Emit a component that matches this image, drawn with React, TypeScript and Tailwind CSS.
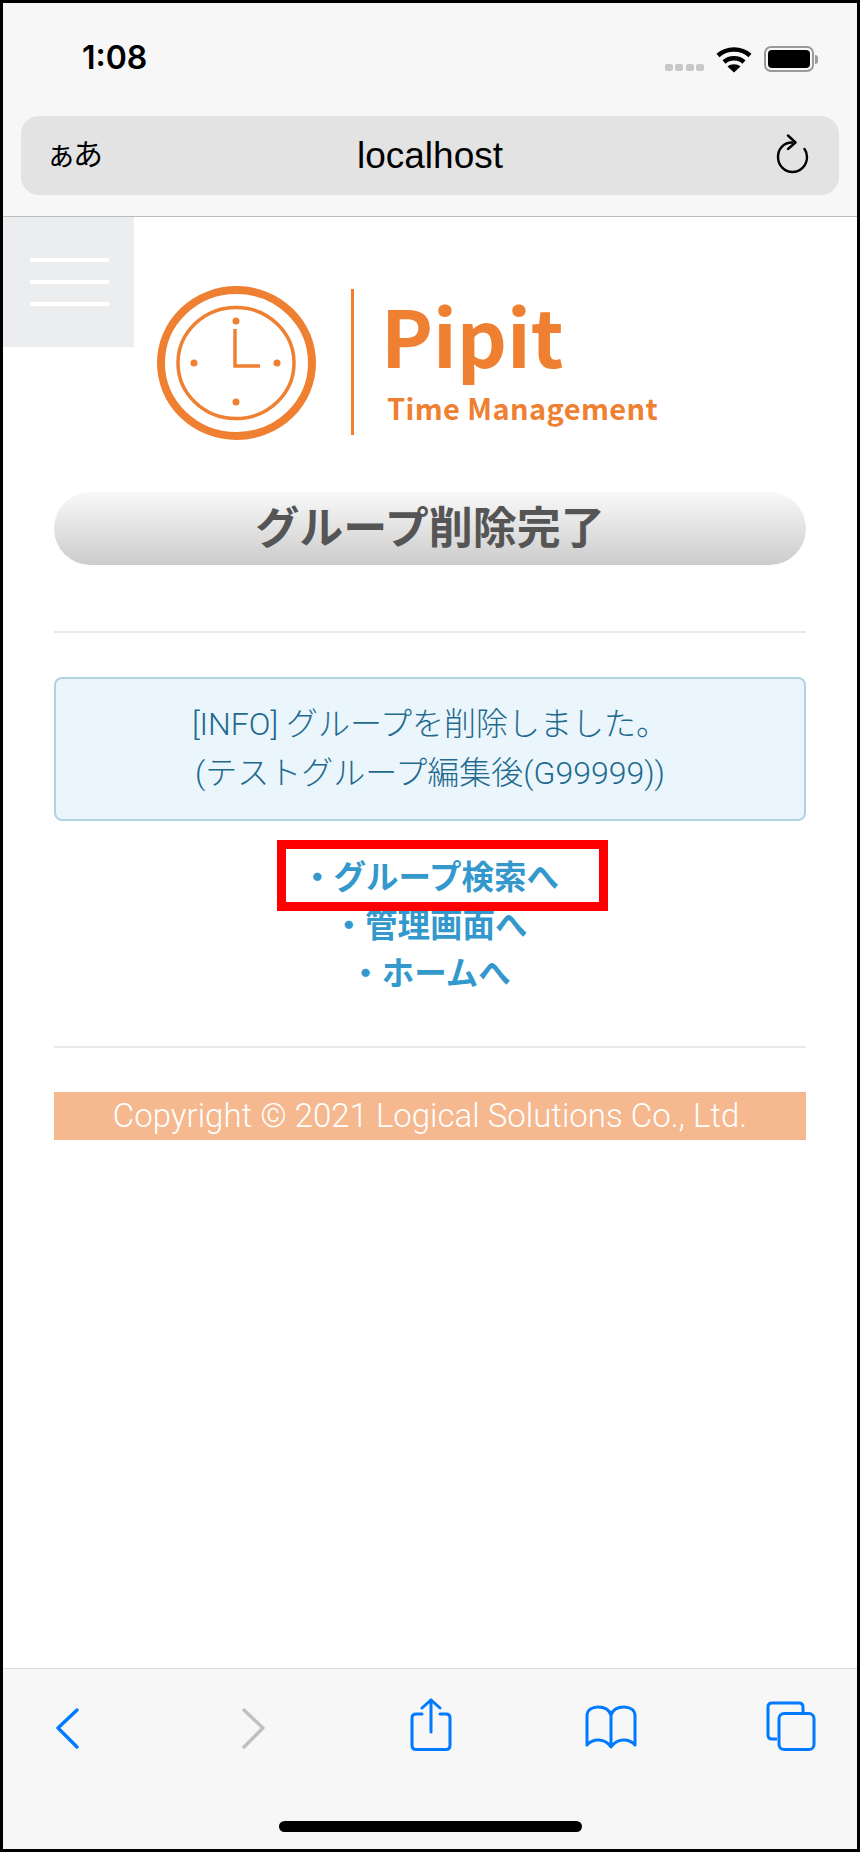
const JP = { fontFamily: '"Liberation Sans", "Noto Sans CJK JP", sans-serif' };
const LIGHT = { fontFamily: 'Roboto, "Noto Sans CJK JP", sans-serif' };

function Wifi() {
  return (
    <svg width="36" height="27" viewBox="0 0 36 27" fill="none">
      <path d="M2 9.5C11 1.5 25 1.5 34 9.5" stroke="#000" strokeWidth="4.5" />
      <path d="M8 16C13.5 11 22.5 11 28 16" stroke="#000" strokeWidth="4.5" />
      <path d="M18 26.5L11.5 20.5C15 17.5 21 17.5 24.5 20.5Z" fill="#000" />
    </svg>
  );
}

function Reload() {
  return (
    <svg width="33" height="40" viewBox="0 0 33 40" fill="none" stroke="#000" strokeWidth="2.4" strokeLinecap="round" strokeLinejoin="round">
      <path d="M16 8.5C8 8.5 2 14.5 2 23C2 31.5 8.5 38 16.5 38C24.5 38 31 31.5 31 23C31 19.5 30 17 28.5 15" />
      <path d="M12 1.5L19.5 8.5L12 15" />
    </svg>
  );
}

function LogoMark() {
  return (
    <svg width="168" height="160" viewBox="0 0 168 160" fill="none" stroke="#ef7f31">
      <ellipse cx="84.5" cy="81" rx="75.5" ry="73" strokeWidth="8" />
      <ellipse cx="84" cy="81" rx="58" ry="55.5" strokeWidth="3.5" />
      <path d="M83 47V84H108" strokeWidth="3.5" />
      <g fill="#ef7f31" stroke="none">
        <ellipse cx="84" cy="39" rx="3.5" ry="3.5" />
        <ellipse cx="84" cy="120" rx="3.5" ry="3.5" />
        <ellipse cx="42" cy="81" rx="3.5" ry="3.5" />
        <ellipse cx="125" cy="81" rx="3.5" ry="3.5" />
      </g>
    </svg>
  );
}

function BottomIcons() {
  return (
    <div className="flex items-start h-[56px] pl-[52px]">
      <svg width="26" height="42" viewBox="0 0 26 42" fill="none" stroke="#007aff" strokeWidth="3.4" strokeLinecap="round" strokeLinejoin="round">
        <path d="M22 3L3 21L22 40" />
      </svg>
      <svg width="26" height="42" viewBox="0 0 26 42" fill="none" stroke="#c0c0c0" strokeWidth="3.4" strokeLinecap="round" strokeLinejoin="round" className="ml-[159px]">
        <path d="M4 3L23 21L4 40" />
      </svg>
      <svg width="42" height="54" viewBox="0 0 42 54" fill="none" stroke="#007aff" strokeWidth="3" strokeLinecap="round" strokeLinejoin="round" className="-mt-[9px] ml-[144px]">
        <path d="M12 16H6C3.5 16 2 17.5 2 20V47C2 50 3.5 51.5 6 51.5H36C38.5 51.5 40 50 40 47V20C40 17.5 38.5 16 36 16H30" />
        <path d="M21 2V34" />
        <path d="M12 10L21 2L30 10" />
      </svg>
      <svg width="52" height="44" viewBox="0 0 52 44" fill="none" stroke="#007aff" strokeWidth="3" strokeLinejoin="round" strokeLinecap="round" className="-mt-[2px] ml-[133px]">
        <path d="M26 10C24 4 19 2 13 2C7 2 2 5 2 11V40C8 33 20 33 26 42C32 33 44 33 50 40V11C50 5 45 2 39 2C33 2 28 4 26 10V40" />
      </svg>
      <svg width="50" height="50" viewBox="0 0 50 50" fill="none" stroke="#007aff" strokeWidth="3" className="-mt-[6px] ml-[129px]">
        <path d="M11 38H6C3.5 38 2 36.5 2 34V6C2 3.5 3.5 2 6 2H33C35.5 2 37 3.5 37 6V12" />
        <rect x="13" y="12.5" width="35" height="36" rx="5" />
      </svg>
    </div>
  );
}

export default function App() {
  return (
    <div className="w-[860px] h-[1852px] flex flex-col border-[3px] border-black bg-white" style={JP}>
      {/* ブラウザ上部 */}
      <header className="h-[214px] shrink-0 bg-[#f7f7f7] border-b border-[#bbbbbb] px-[18px]">
        <div className="flex items-center justify-between h-[113px] pb-[1px]">
          <span className="ml-[61px] text-[32px] font-semibold text-black mb-[2px]" style={{ fontFamily: 'Inter, sans-serif' }}>1:08</span>
          <div className="flex items-center mr-[21px]">
            <div className="flex gap-[2.5px] mt-[16px] mr-[12px]">
              <span className="w-[8px] h-[7px] rounded-[2px] bg-[#c8c8c8]" />
              <span className="w-[8px] h-[7px] rounded-[2px] bg-[#c8c8c8]" />
              <span className="w-[8px] h-[7px] rounded-[2px] bg-[#c8c8c8]" />
              <span className="w-[8px] h-[7px] rounded-[2px] bg-[#c8c8c8]" />
            </div>
            <Wifi />
            <div className="ml-[12px] w-[50px] h-[26px] rounded-[7px] border-2 border-[#9a9a9a] p-[2px]">
              <div className="w-full h-full rounded-[4px] bg-black" />
            </div>
            <span className="ml-[1px] w-[3px] h-[9px] rounded-r-full bg-[#9a9a9a]" />
          </div>
        </div>
        <div className="relative flex items-center justify-center h-[79px] rounded-[18px] bg-[#e3e3e3]">
          <span className="absolute left-[25px] top-[21px] text-[30px] leading-[36px] tracking-[-3px] text-black">ぁあ</span>
          <span className="text-[37px] text-black">localhost</span>
          <span className="absolute right-[30px] top-[18px]">
            <Reload />
          </span>
        </div>
      </header>

      <main className="relative flex-1 px-[51px]">
        {/* メニューボタン */}
        <div className="absolute left-0 top-0 w-[131px] h-[130px] bg-[#ecedef] flex flex-col gap-[18px] pl-[27px] pt-[41px]">
          <span className="w-[79px] h-[4px] bg-white" />
          <span className="w-[79px] h-[4px] bg-white" />
          <span className="w-[79px] h-[4px] bg-white" />
        </div>

        {/* ロゴ */}
        <div className="flex items-center h-[275px] pt-[65px] pb-[50px] pl-[98px]">
          <LogoMark />
          <div className="w-[3px] h-[146px] bg-[#ef7f31] ml-[31px]" />
          <div className="ml-[27px] flex flex-col text-[#ef7f31] font-bold" style={{ fontFamily: '"Noto Sans CJK JP", sans-serif' }}>
            <span className="text-[78px] leading-[84px] -mt-[8px]">Pipit</span>
            <span className="text-[29px] leading-[36px] mt-[13px] ml-[6px] tracking-[0.4px]">Time Management</span>
          </div>
        </div>

        {/* タイトル */}
        <h1 className="flex items-center justify-center h-[73px] rounded-full bg-gradient-to-b from-[#f9f9f9] to-[#cccccc] text-[44px] font-bold text-[#555555]">
          グループ削除完了
        </h1>

        <hr className="mt-[66px] border-t-2 border-[#e9e9e9]" />

        {/* メッセージ */}
        <div className="mt-[44px] h-[144px] flex flex-col justify-center rounded-[8px] border-2 border-[#b2d2e2] bg-[#ebf6fc] text-center text-[32px] leading-[49px] font-light text-[#1f6a8e]" style={LIGHT}>
          <p>[INFO] グループを削除しました。</p>
          <p>(テストグループ編集後(G99999))</p>
        </div>

        {/* リンク */}
        <div className="relative mt-[33px] flex flex-col items-center text-[32.5px] leading-[48px] font-bold text-[#3399cc]">
          <a>・グループ検索へ</a>
          <a>・管理画面へ</a>
          <a>・ホームへ</a>
          <div className="absolute left-[223px] -top-[14px] w-[331px] h-[71px] border-[9px] border-[#ff0000]" />
        </div>

        <hr className="mt-[48px] border-t-2 border-[#e9e9e9]" />

        {/* フッター */}
        <footer className="mt-[44px] h-[48px] flex items-center justify-center bg-[#f5b88f] text-[33px] font-light text-white" style={LIGHT}>
          Copyright © 2021 Logical Solutions Co., Ltd.
        </footer>
      </main>

      {/* ブラウザ下部 */}
      <nav className="shrink-0 h-[181px] bg-[#f7f7f7] border-t border-[#dddddd] pt-[38px]">
        <BottomIcons />
        <div className="mt-[58px] mx-auto w-[303px] h-[11px] rounded-full bg-black" />
      </nav>
    </div>
  );
}
